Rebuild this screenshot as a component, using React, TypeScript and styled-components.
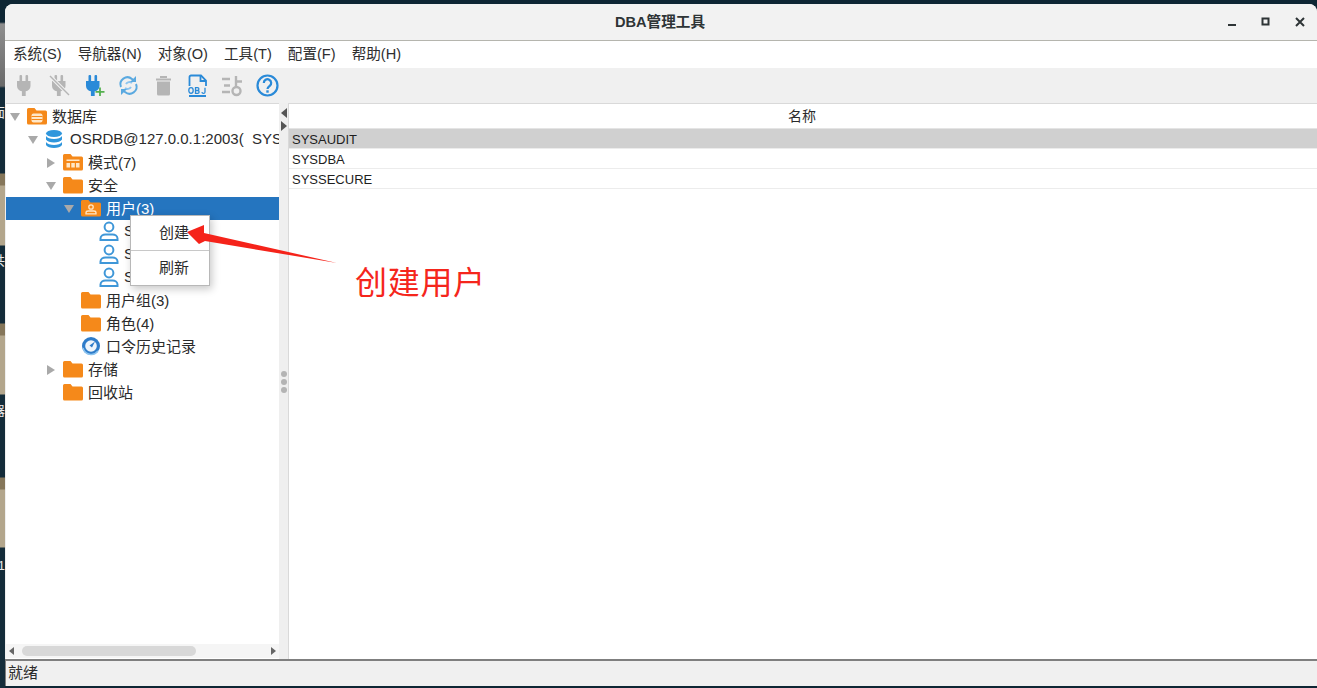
import type { ReactNode } from 'react';
import styled, { createGlobalStyle } from 'styled-components';

const GlobalStyle = createGlobalStyle`
  html, body {
    margin: 0;
    height: 100%;
    overflow: hidden;
    background: #0e2634;
  }
  #root {
    height: 100%;
  }
`;

const FONT = `'Liberation Sans', 'Noto Sans CJK SC', sans-serif`;

const Desktop = styled.div`
  position: relative;
  display: flex;
  width: 1317px;
  height: 688px;
  font-family: ${FONT};
  color: #2e3436;
  background: #0e2634;
`;
const Wallpaper = styled.div`
  position: relative;
  width: 5px;
  flex: none;
  overflow: hidden;
  background: linear-gradient(
    180deg,
    #0e2634 0,
    #0e2634 22px,
    #8e8e8e 24px,
    #6a6a6a 86px,
    #142c3a 88px,
    #142c3a 173px,
    #85765a 174px,
    #85765a 185px,
    #b3a68c 186px,
    #b3a68c 245px,
    #142c3a 246px,
    #142c3a 323px,
    #85765a 324px,
    #85765a 335px,
    #b3a68c 336px,
    #b3a68c 394px,
    #142c3a 395px,
    #142c3a 477px,
    #85765a 478px,
    #85765a 489px,
    #b3a68c 490px,
    #b3a68c 547px,
    #142c3a 548px
  );
`;
const DesktopLabel = styled.span<{ $top: number }>`
  position: absolute;
  right: 0;
  top: ${(p) => p.$top}px;
  font-size: 13px;
  line-height: 16px;
  color: #e8e8e8;
  white-space: nowrap;
`;
const Window = styled.div`
  flex: 1;
  display: flex;
  flex-direction: column;
  margin-top: 4px;
  margin-bottom: 2px;
  min-width: 0;
  border-radius: 8px 8px 0 0;
  background: #ffffff;
  overflow: hidden;
`;
const TitleBar = styled.div`
  position: relative;
  flex: none;
  height: 37px;
  display: flex;
  align-items: center;
  justify-content: center;
  background: #f2f2f2;
  border-bottom: 1px solid #b5b5ae;
  box-sizing: border-box;
`;
const Title = styled.div`
  font-size: 14.6px;
  font-weight: 700;
  color: #2e3436;
  margin-left: -2px;
  margin-bottom: 3px;
`;
const WindowButtons = styled.div`
  position: absolute;
  right: 0;
  top: 0;
  height: 100%;
  display: flex;
  align-items: center;
`;
const WindowButton = styled.div`
  width: 34px;
  height: 34px;
  display: flex;
  align-items: center;
  justify-content: center;
`;
const MenuBar = styled.div`
  flex: none;
  height: 27px;
  padding-left: 8px;
  padding-bottom: 4px;
  box-sizing: border-box;
  display: flex;
  align-items: center;
  gap: 16px;
  background: #ffffff;
`;
const MenuItem = styled.div`
  font-size: 14.6px;
  color: #2e2e2e;
`;
const ToolBar = styled.div`
  flex: none;
  height: 35px;
  padding-left: 7px;
  display: flex;
  align-items: center;
  gap: 9.7px;
  background: #f0f0f0;
`;
const ToolIcon = styled.svg`
  width: 25px;
  height: 25px;
  flex: none;
`;
const Main = styled.div`
  flex: 1;
  min-height: 0;
  display: flex;
  background: #efefef;
`;
const TreePanel = styled.div`
  position: relative;
  width: 273px;
  margin-left: 1px;
  flex: none;
  display: flex;
  flex-direction: column;
  background: #ffffff;
  border-top: 1px solid #d9d9d9;
  box-sizing: border-box;
  overflow: hidden;
`;
const Tree = styled.div`
  flex: 1;
  min-height: 0;
  padding-top: 1px;
`;
const Row = styled.div<{ $depth: number; $selected?: boolean }>`
  height: 23px;
  display: flex;
  align-items: center;
  gap: 5px;
  padding-left: ${(p) => 2 + p.$depth * 18}px;
  white-space: pre;
  font-size: 15px;
  color: ${(p) => (p.$selected ? '#ffffff' : '#2b2b2b')};
  background: ${(p) => (p.$selected ? '#2575bf' : 'transparent')};
`;
const RowLabel = styled.span<{ $leaf?: boolean }>`
  padding-bottom: 3px;
  ${(p) => (p.$leaf ? 'max-width: 80px; overflow: hidden;' : '')}
`;
const Caret = styled.span<{ $open?: boolean; $hidden?: boolean }>`
  width: 14px;
  height: 14px;
  flex: none;
  display: flex;
  align-items: center;
  justify-content: center;
  visibility: ${(p) => (p.$hidden ? 'hidden' : 'visible')};
  &::before {
    content: '';
    border-style: solid;
    border-color: transparent;
    ${(p) =>
      p.$open
        ? `border-width: 8px 5px 0 5px; border-top-color: #a9a9a9;`
        : `border-width: 5px 0 5px 8px; border-left-color: #a9a9a9;`}
  }
`;
const RowIcon = styled.svg`
  width: 22px;
  height: 22px;
  flex: none;
  margin-left: -1px;
  margin-right: -1px;
  margin-bottom: 1px;
`;
const HScroll = styled.div`
  flex: none;
  height: 14px;
  display: flex;
  align-items: center;
  gap: 3px;
  padding: 0 3px;
  margin-bottom: 1px;
  background: #f5f5f5;
`;
const ScrollArrow = styled.span<{ $right?: boolean }>`
  flex: none;
  border-style: solid;
  border-color: transparent;
  ${(p) =>
    p.$right
      ? `border-width: 4px 0 4px 5px; border-left-color: #666;`
      : `border-width: 4px 5px 4px 0; border-right-color: #666;`}
`;
const ScrollTrack = styled.div`
  flex: 1;
  height: 10px;
  margin-left: 5px;
  margin-right: 5px;
`;
const ScrollThumb = styled.div`
  width: 174px;
  height: 100%;
  border-radius: 5px;
  background: #d8d8d8;
`;
const Splitter = styled.div`
  position: relative;
  width: 9px;
  flex: none;
  background: #efefef;
  display: flex;
  align-items: center;
  justify-content: center;
`;
const SplitArrows = styled.div`
  position: absolute;
  top: 5px;
  left: 2px;
  display: flex;
  flex-direction: column;
  gap: 3px;
`;
const SplitArrow = styled.span<{ $right?: boolean }>`
  display: block;
  border-style: solid;
  border-color: transparent;
  ${(p) =>
    p.$right
      ? `border-width: 5px 0 5px 6px; border-left-color: #555;`
      : `border-width: 5px 6px 5px 0; border-right-color: #555;`}
`;
const Grip = styled.div`
  display: flex;
  flex-direction: column;
  gap: 2px;
  margin-top: 1px;
`;
const GripDot = styled.span`
  width: 6px;
  height: 6px;
  border-radius: 50%;
  background: #b4b4b4;
`;
const TablePanel = styled.div`
  flex: 1;
  min-width: 0;
  background: #ffffff;
  border-left: 1px solid #d9d9d9;
  border-top: 1px solid #d9d9d9;
  box-sizing: border-box;
`;
const TableHeader = styled.div`
  height: 25px;
  display: flex;
  align-items: center;
  justify-content: center;
  font-size: 14px;
  color: #2b2b2b;
  padding-bottom: 2px;
  padding-right: 2px;
  box-sizing: border-box;
  border-bottom: 1px solid #e4e4e4;
`;
const TableRow = styled.div<{ $selected?: boolean }>`
  height: 20px;
  display: flex;
  align-items: center;
  padding-left: 3px;
  padding-top: 1px;
  box-sizing: border-box;
  font-size: 13px;
  color: #1e1e1e;
  background: ${(p) => (p.$selected ? '#d0d0d0' : '#ffffff')};
  border-bottom: 1px solid #ececec;
`;
const StatusBar = styled.div`
  flex: none;
  height: 27px;
  padding-left: 2px;
  padding-bottom: 4px;
  display: flex;
  align-items: center;
  box-sizing: border-box;
  font-size: 15px;
  color: #2b2b2b;
  background: #f0f0f0;
  border-top: 2px solid #7f7f7f;
  border-left: 1px solid #7f7f7f;
`;
const ContextMenu = styled.div`
  position: absolute;
  left: 130px;
  top: 215px;
  width: 80px;
  height: 71px;
  box-sizing: border-box;
  background: #ffffff;
  border: 1px solid #b8b8b8;
  box-shadow: 2px 3px 8px rgba(0, 0, 0, 0.22);
`;
const ContextItem = styled.div`
  height: 34px;
  display: flex;
  align-items: center;
  padding-left: 28px;
  padding-bottom: 3px;
  box-sizing: border-box;
  font-size: 15px;
  color: #2b2b2b;
`;
const ContextSeparator = styled.div`
  height: 1px;
  background: #c8c8c8;
`;
const Annotation = styled.svg`
  position: absolute;
  left: 180px;
  top: 218px;
  width: 164px;
  height: 52px;
`;
const AnnotationLabel = styled.div`
  position: absolute;
  left: 355px;
  top: 260px;
  font-size: 32px;
  letter-spacing: 0.7px;
  line-height: 46px;
  color: #f5261c;
`;

const FOLDER = '#f5891a';

const Folder = ({ children }: { children?: ReactNode }) => (
  <RowIcon viewBox="0 0 22 22">
    <path d="M1 4.500A1.500 1.500 0 0 1 2.500 3h6l2 2.500h9A1.500 1.500 0 0 1 21 7v11a1.500 1.500 0 0 1-1.500 1.500h-17A1.500 1.500 0 0 1 1 18z" fill={FOLDER} />
    {children}
  </RowIcon>
);

const UserIcon = () => (
  <RowIcon viewBox="0 0 22 22">
    <g fill="none" stroke="#3f97d8" strokeWidth="2">
      <circle cx="11" cy="7" r="4.400" />
      <path d="M2.500 20v-1.500c0-2.500 2.500-4 5-4h7c2.500 0 5 1.500 5 4V20z" />
    </g>
  </RowIcon>
);

const DbIcon = () => (
  <RowIcon viewBox="0 0 22 22">
    <g fill="#2f96dc">
      <ellipse cx="10" cy="5.500" rx="8" ry="3.500" />
      <path d="M2 8c1 2 4.500 3 8 3s7-1 8-3v3.500c-1 2-4.500 3-8 3s-7-1-8-3z" />
      <path d="M2 14c1 2 4.500 3 8 3s7-1 8-3v3c-1 2-4.500 3-8 3s-7-1-8-3z" />
    </g>
  </RowIcon>
);

const HistoryIcon = () => (
  <RowIcon viewBox="0 0 22 22">
    <circle cx="11" cy="11" r="9" fill="#2e7cc9" />
    <circle cx="11" cy="11" r="5.800" fill="#eef5fb" />
    <path d="M15 6.500L12 12.500 9.500 10.500z" fill="#2e7cc9" />
    <path d="M3 13a8.500 8.500 0 0 0 15 3" fill="none" stroke="#8cc4ef" strokeWidth="1.500" />
  </RowIcon>
);

const Plug = ({ fill }: { fill: string }) => (
  <>
    <rect x="7.500" y="2" width="2.600" height="7" rx="1" fill={fill} />
    <rect x="13.500" y="2" width="2.600" height="7" rx="1" fill={fill} />
    <path d="M5 8h13.500v5c0 3-2.200 4.800-4.800 5.300V23h-3.800v-4.700C7.200 17.800 5 16 5 13z" fill={fill} />
  </>
);

const treeRows = [
  { depth: 0, open: true, icon: <Folder><rect x="5.500" y="8.500" width="11" height="9" rx="2" fill="#ffe7c7" /><path d="M5.500 11.500h11M5.500 14.500h11" stroke={FOLDER} /></Folder>, label: '数据库' },
  { depth: 1, open: true, icon: <DbIcon />, label: 'OSRDB@127.0.0.1:2003(  SYSDBA)' },
  { depth: 2, open: false, icon: <Folder><path d="M4.500 8.500h13V10h-13zM4.500 12h3.500v4.500H4.500zM9.300 12h3.500v4.500H9.300zM14 12h3.500v4.500H14z" fill="#ffe7c7" /></Folder>, label: '模式(7)' },
  { depth: 2, open: true, icon: <Folder />, label: '安全' },
  { depth: 3, open: true, selected: true, icon: <Folder><g fill="none" stroke="#ffe7c7" strokeWidth="1.300"><circle cx="11" cy="10" r="2.200" /><path d="M6 16.800v-1c0-1.300 1-1.800 2.300-1.800h5.400c1.300 0 2.300.5 2.300 1.800v1z" /></g></Folder>, label: '用户(3)' },
  { depth: 4, none: true, leaf: true, icon: <UserIcon />, label: 'SYSAUDIT' },
  { depth: 4, none: true, leaf: true, icon: <UserIcon />, label: 'SYSDBA' },
  { depth: 4, none: true, leaf: true, icon: <UserIcon />, label: 'SYSSECURE' },
  { depth: 3, none: true, icon: <Folder />, label: '用户组(3)' },
  { depth: 3, none: true, icon: <Folder />, label: '角色(4)' },
  { depth: 3, none: true, icon: <HistoryIcon />, label: '口令历史记录' },
  { depth: 2, open: false, icon: <Folder />, label: '存储' },
  { depth: 2, none: true, icon: <Folder />, label: '回收站' },
];

const menus = ['系统(S)', '导航器(N)', '对象(O)', '工具(T)', '配置(F)', '帮助(H)'];

const App = () => (
  <Desktop>
    <GlobalStyle />
    <Wallpaper>
      <DesktopLabel $top={105}>面</DesktopLabel>
      <DesktopLabel $top={253}>共</DesktopLabel>
      <DesktopLabel $top={403}>器</DesktopLabel>
      <DesktopLabel $top={558}>1</DesktopLabel>
    </Wallpaper>
    <Window>
      <TitleBar>
        <Title>DBA管理工具</Title>
        <WindowButtons>
          <WindowButton>
            <svg width="10" height="10" viewBox="0 0 10 10"><rect x="1" y="7" width="8" height="2" fill="#2e3436" /></svg>
          </WindowButton>
          <WindowButton>
            <svg width="10" height="10" viewBox="0 0 10 10"><rect x="1.500" y="1.500" width="6" height="6" fill="none" stroke="#2e3436" strokeWidth="2" /></svg>
          </WindowButton>
          <WindowButton>
            <svg width="10" height="10" viewBox="0 0 10 10"><path d="M1 1l8 8M9 1l-8 8" stroke="#2e3436" strokeWidth="2" /></svg>
          </WindowButton>
        </WindowButtons>
      </TitleBar>
      <MenuBar>
        {menus.map((m) => (
          <MenuItem key={m}>{m}</MenuItem>
        ))}
      </MenuBar>
      <ToolBar>
        <ToolIcon viewBox="0 0 25 25"><Plug fill="#b5b5b5" /></ToolIcon>
        <ToolIcon viewBox="0 0 25 25">
          <Plug fill="#b5b5b5" />
          <path d="M3 3l19 19" stroke="#f0f0f0" strokeWidth="3.500" />
          <path d="M3 3l19 19" stroke="#b5b5b5" strokeWidth="1.500" />
        </ToolIcon>
        <ToolIcon viewBox="0 0 25 25">
          <Plug fill="#2a8ad8" />
          <path d="M19 14.500v8.500M14.500 18.800h9" stroke="#55b04f" strokeWidth="1.800" />
        </ToolIcon>
        <ToolIcon viewBox="0 0 25 25">
          <g fill="none" stroke="#5aa9e0" strokeWidth="2">
            <path d="M5 14a7 7 0 0 1 11-8l2 2" />
            <path d="M20 11a7 7 0 0 1-11 8l-2-2" />
            <path d="M10 11a4 4 0 0 1 6-1M15 14a4 4 0 0 1-6 1" stroke="#8cc4ef" />
          </g>
          <path d="M20 3v6h-6zM5 22v-6h6z" fill="#5aa9e0" />
        </ToolIcon>
        <ToolIcon viewBox="0 0 25 25">
          <path d="M5 5.500h15v2H5zM9 3h7v2H9z" fill="#b5b5b5" />
          <path d="M6 8.500h13V21a1.500 1.500 0 0 1-1.500 1.500h-10A1.500 1.500 0 0 1 6 21z" fill="#b5b5b5" />
        </ToolIcon>
        <ToolIcon viewBox="0 0 25 25">
          <path d="M4.500 13V4a1.500 1.500 0 0 1 1.500-1.500h10l5 5V13" fill="none" stroke="#2a8ad8" strokeWidth="1.800" />
          <path d="M15.500 2.500v5.500h5.500" fill="none" stroke="#2a8ad8" strokeWidth="1.800" />
          <path d="M4 23h17" stroke="#2a8ad8" strokeWidth="1.800" />
          <g fill="none" stroke="#2a8ad8" strokeWidth="1.300">
            <ellipse cx="6" cy="17.500" rx="2.200" ry="2.800" />
            <path d="M10.500 14.700v5.600h2.200a1.400 1.400 0 0 0 0-2.800h-2.200 2a1.400 1.400 0 0 0 0-2.800z" />
            <path d="M20 14.700v4.200a1.500 1.500 0 0 1-3 0" />
          </g>
        </ToolIcon>
        <ToolIcon viewBox="0 0 25 25">
          <g stroke="#b5b5b5" strokeWidth="2.400" fill="none">
            <path d="M2 6h8M4 12.500h6M2 19h8" />
            <path d="M16 3v11M15 8.500h7" />
            <circle cx="16.500" cy="18" r="4" />
          </g>
        </ToolIcon>
        <ToolIcon viewBox="0 0 25 25">
          <circle cx="12.500" cy="12.500" r="10" fill="none" stroke="#2a8ad8" strokeWidth="2.200" />
          <path d="M8.800 10a3.700 3.700 0 1 1 5.800 3c-1.400 1-2.100 1.600-2.100 3" fill="none" stroke="#2a8ad8" strokeWidth="2.200" />
          <rect x="11.300" y="17.300" width="2.400" height="2.400" fill="#2a8ad8" />
        </ToolIcon>
      </ToolBar>
      <Main>
        <TreePanel>
          <Tree>
            {treeRows.map((r) => (
              <Row key={r.label} $depth={r.depth} $selected={r.selected}>
                <Caret $open={r.open} $hidden={r.none} />
                {r.icon}
                <RowLabel $leaf={r.leaf}>{r.label}</RowLabel>
              </Row>
            ))}
          </Tree>
          <HScroll>
            <ScrollArrow />
            <ScrollTrack><ScrollThumb /></ScrollTrack>
            <ScrollArrow $right />
          </HScroll>
        </TreePanel>
        <Splitter>
          <SplitArrows>
            <SplitArrow />
            <SplitArrow $right />
          </SplitArrows>
          <Grip>
            <GripDot />
            <GripDot />
            <GripDot />
          </Grip>
        </Splitter>
        <TablePanel>
          <TableHeader>名称</TableHeader>
          <TableRow $selected>SYSAUDIT</TableRow>
          <TableRow>SYSDBA</TableRow>
          <TableRow>SYSSECURE</TableRow>
        </TablePanel>
      </Main>
      <StatusBar>就绪</StatusBar>
    </Window>
    <ContextMenu>
      <ContextItem>创建</ContextItem>
      <ContextSeparator />
      <ContextItem>刷新</ContextItem>
    </ContextMenu>
    <Annotation viewBox="180 218 164 52">
      <polygon points="187,232 204,225 204,233 337,263 205,241 199,244" fill="#f5231a" />
    </Annotation>
    <AnnotationLabel>创建用户</AnnotationLabel>
  </Desktop>
);

export default App;
